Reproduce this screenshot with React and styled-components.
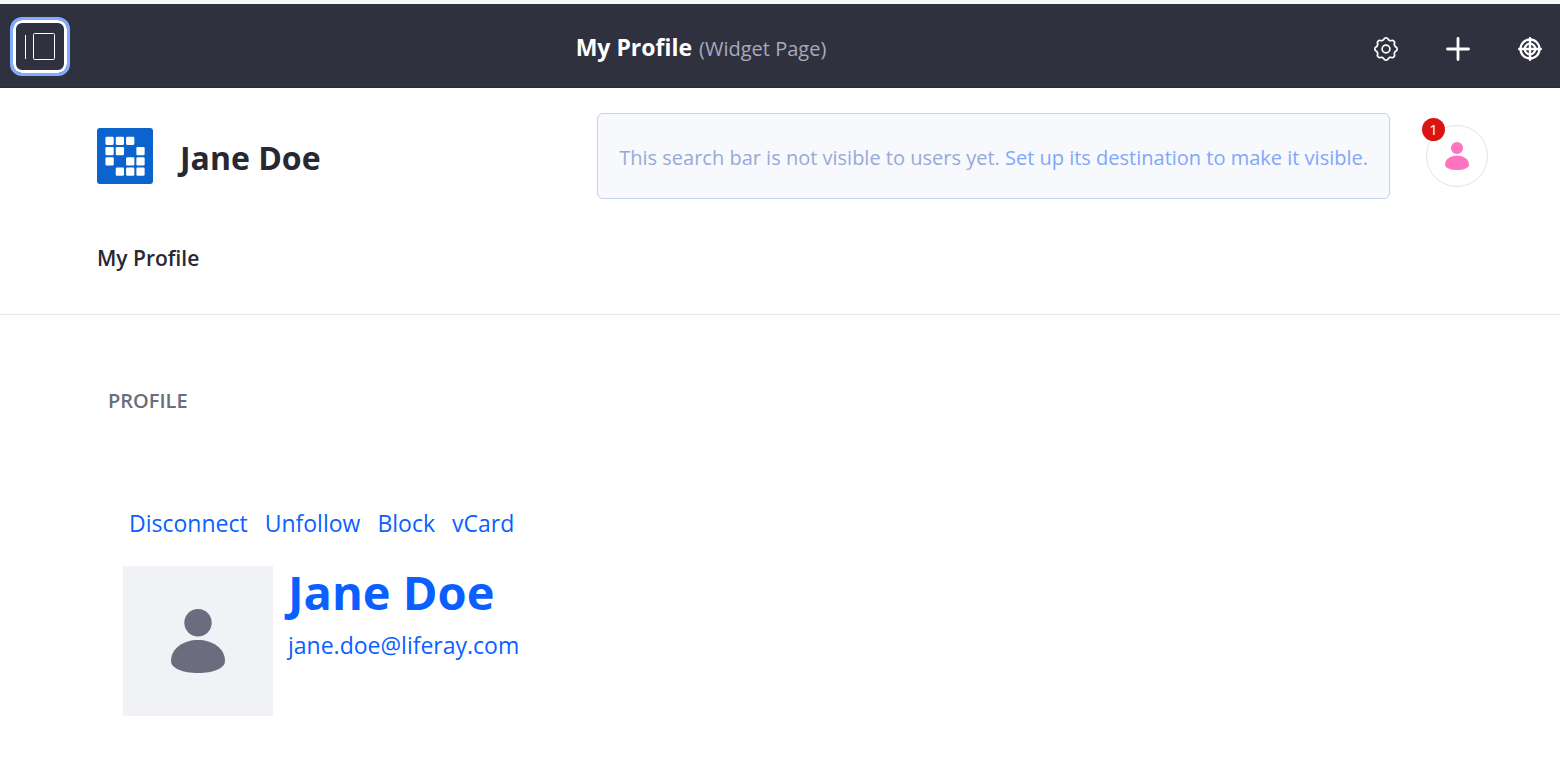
import React from "react";
import styled, { createGlobalStyle } from "styled-components";

const GlobalStyle = createGlobalStyle`
  *, *::before, *::after { box-sizing: border-box; }
  body {
    margin: 0;
    background: #fff;
    color: #272833;
    font-family: "Segoe UI", "Open Sans", "Noto Sans", sans-serif;
    font-size: 22px;
    line-height: 32px;
  }
  h1, h2, p { margin: 0; }
  a { color: #0b5fff; text-decoration: none; }
  svg { display: block; }
`;

const ControlBar = styled.header`
  display: flex;
  align-items: center;
  height: 88px;
  padding: 1px 6px 0 10px;
  background: #30313f;
  border-top: 4px solid #f7f7f7;
  box-shadow: inset 0 -1px 0 #2b2c39;
`;

const MenuToggle = styled.button`
  display: grid;
  place-items: center;
  width: 60px;
  height: 59px;
  padding: 0;
  border: 3px solid #80acff;
  border-radius: 12px;
  background: #30313f;
  box-shadow: inset 0 0 0 3px #fff;
`;

const BarTitle = styled.div`
  display: flex;
  flex: 1;
  justify-content: center;
  align-items: baseline;
  gap: 7px;
  margin-right: 30px;
  padding-top: 2px;
`;

const BarHeading = styled.strong`
  color: #fff;
  font-size: 23px;
  font-weight: 700;
`;

const BarNote = styled.span`
  color: #a7a9bc;
  font-size: 20px;
`;

const BarActions = styled.div`
  display: flex;
  gap: 24px;
`;

const IconButton = styled.button`
  display: grid;
  place-items: center;
  width: 48px;
  height: 48px;
  padding: 4px 0 0;
  border: 0;
  background: none;
  color: #fff;
`;

const SiteHeader = styled.div`
  padding: 25px 72px 40px 97px;
  border-bottom: 1px solid #e7e7ed;
`;

const BrandRow = styled.div`
  display: flex;
  align-items: center;
`;

const Brand = styled.a`
  display: flex;
  align-items: center;
  gap: 27px;
  margin-right: auto;
`;

const BrandName = styled.h1`
  padding-top: 4px;
  color: #272833;
  font-size: 32px;
  line-height: 40px;
  font-weight: 700;
`;

const SearchNotice = styled.p`
  padding: 28px 21px 24px;
  border: 1px solid #c4d1ed;
  border-radius: 6px;
  background: #f8f9fd;
  color: #97aad6;
  font-size: 20px;
  white-space: nowrap;
`;

const NoticeLink = styled.a`
  color: #80a7fb;
`;

const UserMenu = styled.button`
  position: relative;
  display: grid;
  place-items: center;
  width: 62px;
  height: 62px;
  margin-left: 36px;
  padding: 0;
  border: 1px solid #e2e2e9;
  border-radius: 50%;
  background: #fff;
  color: #ff73c3;
`;

const Badge = styled.span`
  position: absolute;
  top: -8px;
  left: -5px;
  width: 23px;
  height: 23px;
  border-radius: 50%;
  background: #da1414;
  color: #fff;
  font-family: "Segoe UI", "Open Sans", "Noto Sans", sans-serif;
  font-size: 15px;
  line-height: 23px;
  text-align: center;
`;

const SiteNav = styled.nav`
  margin-top: 42px;
`;

const NavLink = styled.a`
  color: #272833;
  font-size: 21px;
  font-weight: 600;
`;

const Portlet = styled.main`
  padding: 70px 108px 68px;
`;

const PortletTitle = styled.h2`
  color: #6b6c7e;
  font-size: 20px;
  font-weight: 600;
`;

const ContactActions = styled.div`
  display: flex;
  gap: 17px;
  margin-top: 90px;
  padding-left: 21px;
  font-size: 23px;
`;

const Contact = styled.section`
  display: flex;
  gap: 15px;
  margin-top: 27px;
  padding-left: 15px;
`;

const Portrait = styled.div`
  display: grid;
  place-items: center;
  width: 150px;
  height: 150px;
  background: #f1f2f5;
  color: #6b6c7e;
`;

const ContactInfo = styled.div`
  display: flex;
  flex-direction: column;
  gap: 10px;
`;

const ContactName = styled.a`
  font-size: 47px;
  line-height: 53px;
  font-weight: 700;
`;

const ContactMail = styled.a`
  font-size: 23px;
`;

const LOGO_ROWS = ["1110", "1101", "1011", "0111"];

const Logo = () => (
  <svg width="56" height="56" viewBox="0 0 57 57" aria-hidden="true">
    <rect width="57" height="57" rx="3" fill="#0b63ce" />
    {LOGO_ROWS.map((row, y) =>
      [...row].map((cell, x) =>
        cell === "1" ? (
          <rect key={`${x}-${y}`} x={8.6 + x * 10.5} y={8.8 + y * 10.5} width="8.4" height="8.4" rx="1.3" fill="#fff" />
        ) : null
      )
    )}
  </svg>
);

const PersonIcon = ({ width, height }) => (
  <svg width={width} height={height} viewBox="0 0 54 64" preserveAspectRatio="none" fill="currentColor" aria-hidden="true">
    <circle cx="27" cy="13.7" r="13.7" />
    <path d="M27 31C41 31 54 39 54 52C54 59.500 42 64 27 64S0 59.500 0 52C0 39 13 31 27 31Z" />
  </svg>
);

const GEAR_OUTLINE =
  Array.from({ length: 96 }, (_, i) => {
    const a = (i / 96) * Math.PI * 2;
    const r = 10.2 + 0.9 * Math.tanh(2 * Math.cos(8 * a));
    return `${i ? "L" : "M"}${(12 + r * Math.cos(a)).toFixed(2)} ${(12 + r * Math.sin(a)).toFixed(2)}`;
  }).join("") + "Z";

const GearIcon = () => (
  <svg width="24" height="24" viewBox="0 0 24 24" fill="none" stroke="currentColor" strokeWidth="1.700" strokeLinejoin="round" aria-hidden="true">
    <path d={GEAR_OUTLINE} />
    <circle cx="12" cy="12" r="3.900" />
  </svg>
);

const PlusIcon = () => (
  <svg width="24" height="24" viewBox="0 0 24 24" stroke="currentColor" strokeWidth="2.8" strokeLinecap="round" aria-hidden="true">
    <path d="M12 1.500V22.500M1.500 12H22.500" />
  </svg>
);

const TargetIcon = () => (
  <svg width="24" height="24" viewBox="0 0 24 24" fill="none" stroke="currentColor" strokeLinecap="round" aria-hidden="true">
    <circle cx="12" cy="12" r="9.5" strokeWidth="2.300" />
    <circle cx="12" cy="12" r="5.300" strokeWidth="2.300" />
    <path d="M12 1.200V22.800M1.200 12H22.800" strokeWidth="2.400" />
  </svg>
);

const PanelIcon = () => (
  <svg width="32" height="29" viewBox="0 0 32 29" fill="none" stroke="#fff" strokeWidth="1" aria-hidden="true">
    <path d="M1.500 3V27" />
    <rect x="9.500" y="1.500" width="21" height="26" rx="1" />
  </svg>
);

export default function App() {
  return (
    <>
      <GlobalStyle />
      <ControlBar>
        <MenuToggle type="button" aria-label="Toggle product menu">
          <PanelIcon />
        </MenuToggle>
        <BarTitle>
          <BarHeading>My Profile</BarHeading>
          <BarNote>(Widget Page)</BarNote>
        </BarTitle>
        <BarActions>
          <IconButton type="button" aria-label="Configure page"><GearIcon /></IconButton>
          <IconButton type="button" aria-label="Add"><PlusIcon /></IconButton>
          <IconButton type="button" aria-label="Simulation"><TargetIcon /></IconButton>
        </BarActions>
      </ControlBar>

      <SiteHeader>
        <BrandRow>
          <Brand href="#home">
            <Logo />
            <BrandName>Jane Doe</BrandName>
          </Brand>
          <SearchNotice>
            This search bar is not visible to users yet.{" "}
            <NoticeLink href="#setup">Set up its destination to make it visible.</NoticeLink>
          </SearchNotice>
          <UserMenu type="button" aria-label="User menu">
            <PersonIcon width={24} height={28} />
            <Badge>1</Badge>
          </UserMenu>
        </BrandRow>
        <SiteNav>
          <NavLink href="#profile">My Profile</NavLink>
        </SiteNav>
      </SiteHeader>

      <Portlet>
        <PortletTitle>PROFILE</PortletTitle>
        <ContactActions>
          <a href="#disconnect">Disconnect</a>
          <a href="#unfollow">Unfollow</a>
          <a href="#block">Block</a>
          <a href="#vcard">vCard</a>
        </ContactActions>
        <Contact>
          <Portrait><PersonIcon width={54} height={64} /></Portrait>
          <ContactInfo>
            <ContactName href="#jane">Jane Doe</ContactName>
            <ContactMail href="#mail">jane.doe@liferay.com</ContactMail>
          </ContactInfo>
        </Contact>
      </Portlet>
    </>
  );
}
